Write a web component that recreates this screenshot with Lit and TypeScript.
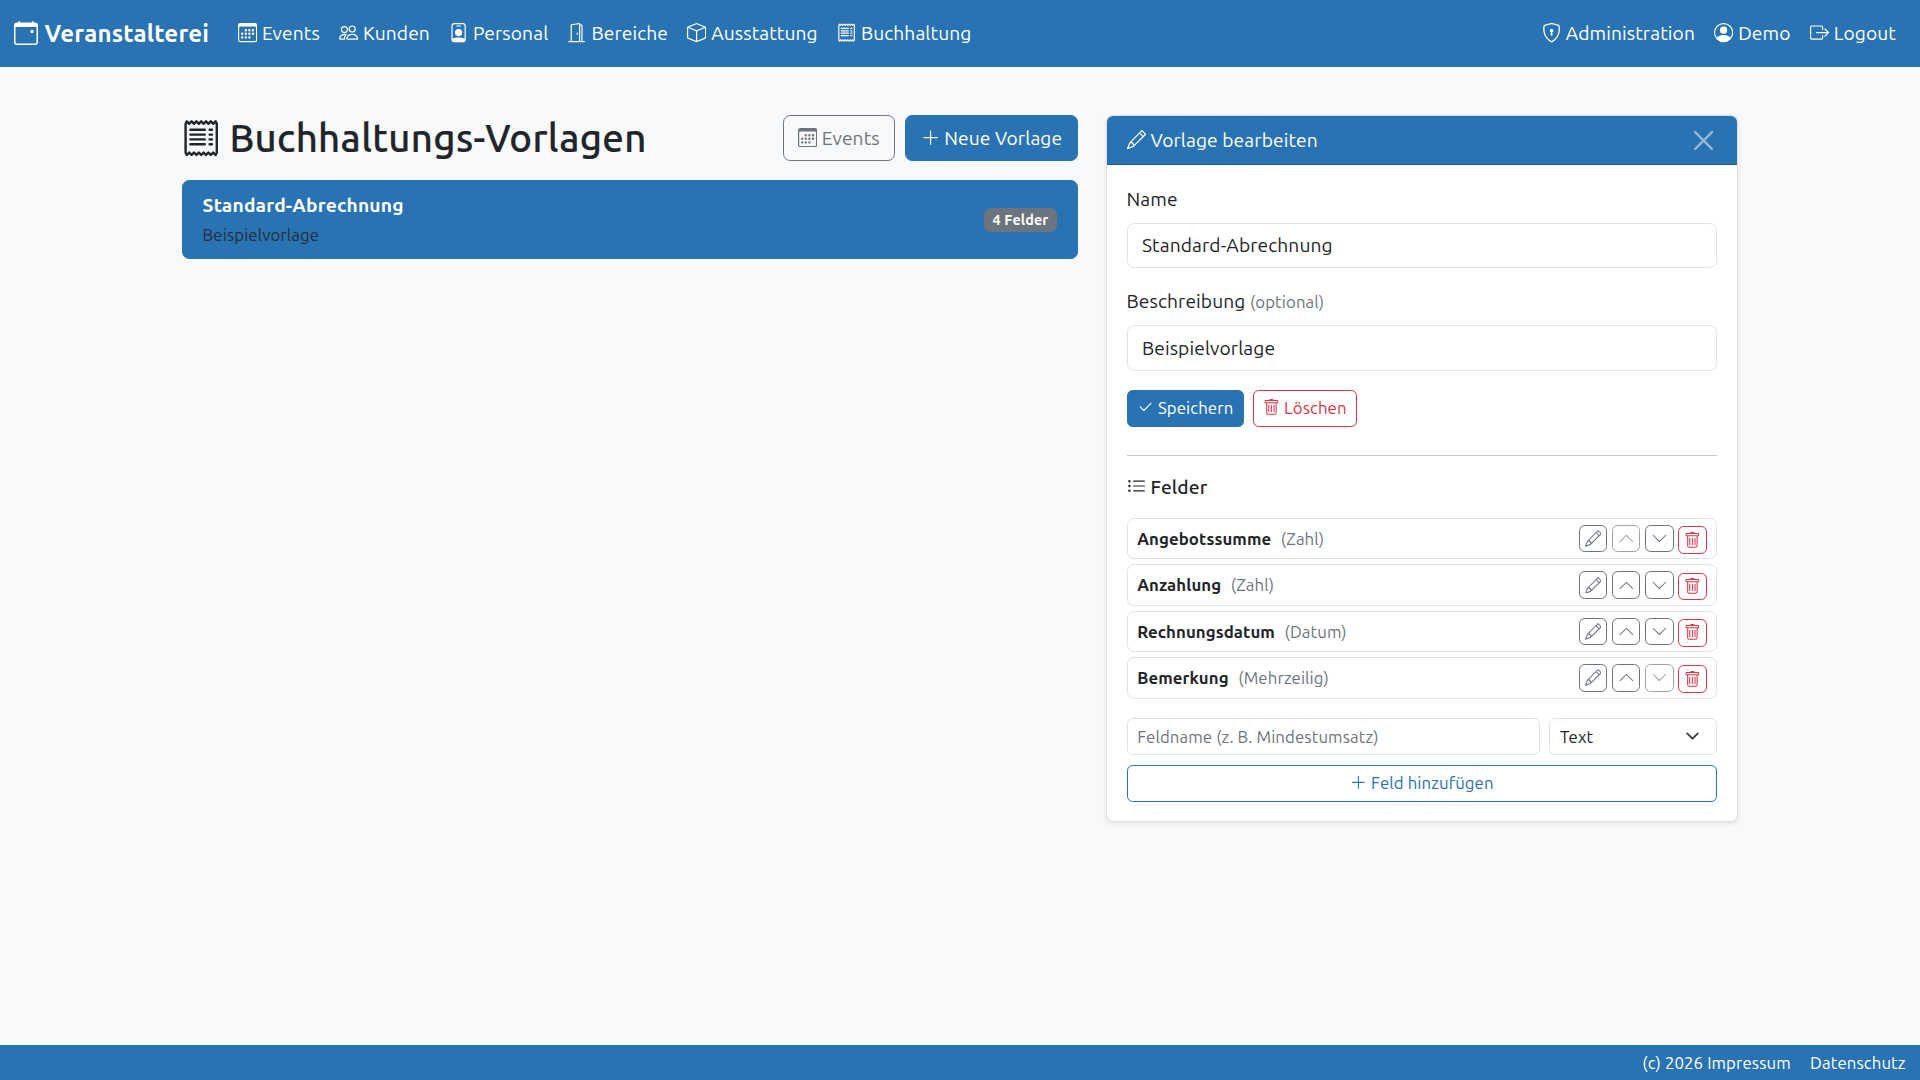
import {LitElement, css, html, svg} from 'lit';
import {customElement} from 'lit/decorators.js';

const ICONS: Record<string, string[]> = {
  calendarEvent: [
    'M11 6.5a.5.5 0 0 1 .5-.5h1a.5.5 0 0 1 .5.5v1a.5.5 0 0 1-.5.5h-1a.5.5 0 0 1-.5-.5z',
    'M3.5 0a.5.5 0 0 1 .5.5V1h8V.5a.5.5 0 0 1 1 0V1h1a2 2 0 0 1 2 2v11a2 2 0 0 1-2 2H2a2 2 0 0 1-2-2V3a2 2 0 0 1 2-2h1V.5a.5.5 0 0 1 .5-.5M1 4v10a1 1 0 0 0 1 1h12a1 1 0 0 0 1-1V4z',
  ],
  calendar3: [
    'M14 0H2a2 2 0 0 0-2 2v12a2 2 0 0 0 2 2h12a2 2 0 0 0 2-2V2a2 2 0 0 0-2-2M1 3.857C1 3.384 1.448 3 2 3h12c.552 0 1 .384 1 .857v10.286c0 .473-.448.857-1 .857H2c-.552 0-1-.384-1-.857z',
    'M6.5 7a1 1 0 1 0 0-2 1 1 0 0 0 0 2m3 0a1 1 0 1 0 0-2 1 1 0 0 0 0 2m3 0a1 1 0 1 0 0-2 1 1 0 0 0 0 2m-9 3a1 1 0 1 0 0-2 1 1 0 0 0 0 2m3 0a1 1 0 1 0 0-2 1 1 0 0 0 0 2m3 0a1 1 0 1 0 0-2 1 1 0 0 0 0 2m3 0a1 1 0 1 0 0-2 1 1 0 0 0 0 2m-9 3a1 1 0 1 0 0-2 1 1 0 0 0 0 2m3 0a1 1 0 1 0 0-2 1 1 0 0 0 0 2m3 0a1 1 0 1 0 0-2 1 1 0 0 0 0 2',
  ],
  people: [
    'M15 14s1 0 1-1-1-4-5-4-5 3-5 4 1 1 1 1zm-7.978-1L7 12.996c.001-.264.167-1.03.76-1.72C8.312 10.629 9.282 10 11 10c1.717 0 2.687.63 3.24 1.276.593.69.758 1.457.76 1.72l-.008.002-.014.002zM11 7a2 2 0 1 0 0-4 2 2 0 0 0 0 4m3-2a3 3 0 1 1-6 0 3 3 0 0 1 6 0M6.936 9.28a6 6 0 0 0-1.23-.247A7 7 0 0 0 5 9c-4 0-5 3-5 4q0 1 1 1h4.216A2.24 2.24 0 0 1 5 13c0-1.01.377-2.042 1.09-2.904.243-.294.526-.569.846-.816M4.92 10A5.5 5.5 0 0 0 4 13H1c0-.26.164-1.03.76-1.724.545-.636 1.492-1.256 3.16-1.275ZM1.5 5.5a3 3 0 1 1 6 0 3 3 0 0 1-6 0m3-2a2 2 0 1 0 0 4 2 2 0 0 0 0-4',
  ],
  personBadge: [
    'M6.5 2a.5.5 0 0 0 0 1h3a.5.5 0 0 0 0-1zM11 8a3 3 0 1 1-6 0 3 3 0 0 1 6 0',
    'M4.5 0A2.5 2.5 0 0 0 2 2.5V14a2 2 0 0 0 2 2h8a2 2 0 0 0 2-2V2.5A2.5 2.5 0 0 0 11.5 0zM3 2.5A1.5 1.5 0 0 1 4.5 1h7A1.5 1.5 0 0 1 13 2.5v10.795a4.2 4.2 0 0 0-.776-.492C11.392 12.387 10.063 12 8 12s-3.392.387-4.224.803a4.2 4.2 0 0 0-.776.492z',
  ],
  doorOpen: [
    'M8.5 10c-.276 0-.5-.448-.5-1s.224-1 .5-1 .5.448.5 1-.224 1-.5 1',
    'M10.828.122A.5.5 0 0 1 11 .5V1h.5A1.5 1.5 0 0 1 13 2.5V15h1.5a.5.5 0 0 1 0 1h-13a.5.5 0 0 1 0-1H3V1.5a.5.5 0 0 1 .43-.495l7-1a.5.5 0 0 1 .398.117M11.5 2H11v13h1V2.5a.5.5 0 0 0-.5-.5M4 1.934V15h6V1.077z',
  ],
  box: [
    'M8.186 1.113a.5.5 0 0 0-.372 0L1.846 3.5 8 5.961 14.154 3.5zM15 4.239l-6.5 2.6v7.922l6.5-2.6V4.24zM7.5 14.762V6.838L1 4.239v7.923zM7.443.184a1.5 1.5 0 0 1 1.114 0l7.129 2.852A.5.5 0 0 1 16 3.5v8.662a1 1 0 0 1-.629.928l-7.185 2.874a.5.5 0 0 1-.372 0L.63 13.09a1 1 0 0 1-.63-.928V3.5a.5.5 0 0 1 .314-.464z',
  ],
  receipt: [
    'M1.92.506a.5.5 0 0 1 .434.14L3 1.293l.646-.647a.5.5 0 0 1 .708 0L5 1.293l.646-.647a.5.5 0 0 1 .708 0L7 1.293l.646-.647a.5.5 0 0 1 .708 0L9 1.293l.646-.647a.5.5 0 0 1 .708 0l.646.647.646-.647a.5.5 0 0 1 .708 0l.646.647.646-.647a.5.5 0 0 1 .801.13l.5 1A.5.5 0 0 1 15 2v12a.5.5 0 0 1-.053.224l-.5 1a.5.5 0 0 1-.8.13L13 14.707l-.646.647a.5.5 0 0 1-.708 0L11 14.707l-.646.647a.5.5 0 0 1-.708 0L9 14.707l-.646.647a.5.5 0 0 1-.708 0L7 14.707l-.646.647a.5.5 0 0 1-.708 0L5 14.707l-.646.647a.5.5 0 0 1-.708 0L3 14.707l-.646.647a.5.5 0 0 1-.801-.13l-.5-1A.5.5 0 0 1 1 14V2a.5.5 0 0 1 .053-.224l.5-1a.5.5 0 0 1 .367-.27m.217 1.338L2 2.118v11.764l.137.274.51-.51a.5.5 0 0 1 .707 0l.646.647.646-.646a.5.5 0 0 1 .708 0l.646.646.646-.646a.5.5 0 0 1 .708 0l.646.646.646-.646a.5.5 0 0 1 .708 0l.646.646.646-.646a.5.5 0 0 1 .708 0l.646.646.646-.646a.5.5 0 0 1 .708 0l.509.509.137-.274V2.118l-.137-.274-.51.51a.5.5 0 0 1-.707 0L12 1.707l-.646.647a.5.5 0 0 1-.708 0L10 1.707l-.646.647a.5.5 0 0 1-.708 0L8 1.707l-.646.647a.5.5 0 0 1-.708 0L6 1.707l-.646.647a.5.5 0 0 1-.708 0L4 1.707l-.646.647a.5.5 0 0 1-.708 0z',
    'M3 4.5a.5.5 0 0 1 .5-.5h6a.5.5 0 1 1 0 1h-6a.5.5 0 0 1-.5-.5m0 2a.5.5 0 0 1 .5-.5h6a.5.5 0 1 1 0 1h-6a.5.5 0 0 1-.5-.5m0 2a.5.5 0 0 1 .5-.5h6a.5.5 0 1 1 0 1h-6a.5.5 0 0 1-.5-.5m0 2a.5.5 0 0 1 .5-.5h6a.5.5 0 0 1 0 1h-6a.5.5 0 0 1-.5-.5m8-6a.5.5 0 0 1 .5-.5h1a.5.5 0 0 1 0 1h-1a.5.5 0 0 1-.5-.5m0 2a.5.5 0 0 1 .5-.5h1a.5.5 0 0 1 0 1h-1a.5.5 0 0 1-.5-.5m0 2a.5.5 0 0 1 .5-.5h1a.5.5 0 0 1 0 1h-1a.5.5 0 0 1-.5-.5m0 2a.5.5 0 0 1 .5-.5h1a.5.5 0 0 1 0 1h-1a.5.5 0 0 1-.5-.5',
  ],
  shieldLock: [
    'M5.338 1.59a61 61 0 0 0-2.837.856.48.48 0 0 0-.328.39c-.554 4.157.726 7.19 2.253 9.188a10.7 10.7 0 0 0 2.287 2.233c.346.244.652.42.893.533q.18.085.293.118a1 1 0 0 0 .101.025 1 1 0 0 0 .1-.025q.114-.034.294-.118c.24-.113.547-.29.893-.533a10.7 10.7 0 0 0 2.287-2.233c1.527-1.997 2.807-5.031 2.253-9.188a.48.48 0 0 0-.328-.39c-.651-.213-1.75-.56-2.837-.855C9.552 1.29 8.531 1.067 8 1.067c-.53 0-1.552.223-2.662.524zM5.072.56C6.157.265 7.31 0 8 0s1.843.265 2.928.56c1.11.3 2.229.655 2.887.87a1.54 1.54 0 0 1 1.044 1.262c.596 4.477-.787 7.795-2.465 9.99a11.8 11.8 0 0 1-2.517 2.453 7 7 0 0 1-1.048.625c-.28.132-.581.24-.829.24s-.548-.108-.829-.24a7 7 0 0 1-1.048-.625 11.8 11.8 0 0 1-2.517-2.453C1.928 10.487.545 7.169 1.141 2.692A1.54 1.54 0 0 1 2.185 1.43 63 63 0 0 1 5.072.56',
    'M9.5 6.5a1.5 1.5 0 0 1-1 1.415l.385 1.99a.5.5 0 0 1-.491.595h-.788a.5.5 0 0 1-.49-.595l.384-1.99a1.5 1.5 0 1 1 2-1.415',
  ],
  personCircle: [
    'M11 6a3 3 0 1 1-6 0 3 3 0 0 1 6 0',
    'M0 8a8 8 0 1 1 16 0A8 8 0 0 1 0 8m8-7a7 7 0 0 0-5.468 11.37C3.242 11.226 4.805 10 8 10s4.757 1.225 5.468 2.37A7 7 0 0 0 8 1',
  ],
  logout: [
    'M10 12.5a.5.5 0 0 1-.5.5h-8a.5.5 0 0 1-.5-.5v-9a.5.5 0 0 1 .5-.5h8a.5.5 0 0 1 .5.5v2a.5.5 0 0 0 1 0v-2A1.5 1.5 0 0 0 9.5 2h-8A1.5 1.5 0 0 0 0 3.5v9A1.5 1.5 0 0 0 1.5 14h8a1.5 1.5 0 0 0 1.5-1.5v-2a.5.5 0 0 0-1 0z',
    'M15.854 8.354a.5.5 0 0 0 0-.708l-3-3a.5.5 0 0 0-.708.708L14.293 7.5H5.5a.5.5 0 0 0 0 1h8.793l-2.147 2.146a.5.5 0 0 0 .708.708z',
  ],
  plus: [
    'M8 2a.5.5 0 0 1 .5.5v5h5a.5.5 0 0 1 0 1h-5v5a.5.5 0 0 1-1 0v-5h-5a.5.5 0 0 1 0-1h5v-5A.5.5 0 0 1 8 2',
  ],
  pencil: [
    'M12.146.146a.5.5 0 0 1 .708 0l3 3a.5.5 0 0 1 0 .708l-10 10a.5.5 0 0 1-.168.11l-5 2a.5.5 0 0 1-.65-.65l2-5a.5.5 0 0 1 .11-.168zM11.207 2.5 13.5 4.793 14.793 3.5 12.5 1.207zm1.586 3L10.5 3.207 4 9.707V10h.5a.5.5 0 0 1 .5.5v.5h.5a.5.5 0 0 1 .5.5v.5h.293zm-9.761 5.175-.106.106-1.528 3.821 3.821-1.528.106-.106A.5.5 0 0 1 5 12.5V12h-.5a.5.5 0 0 1-.5-.5V11h-.5a.5.5 0 0 1-.468-.325',
  ],
  check: [
    'M13.854 3.646a.5.5 0 0 1 0 .708l-7 7a.5.5 0 0 1-.708 0l-3.5-3.5a.5.5 0 1 1 .708-.708L6.5 10.293l6.646-6.647a.5.5 0 0 1 .708 0',
  ],
  trash: [
    'M5.5 5.5A.5.5 0 0 1 6 6v6a.5.5 0 0 1-1 0V6a.5.5 0 0 1 .5-.5m2.5 0a.5.5 0 0 1 .5.5v6a.5.5 0 0 1-1 0V6a.5.5 0 0 1 .5-.5m3 .5a.5.5 0 0 0-1 0v6a.5.5 0 0 0 1 0z',
    'M14.5 3a1 1 0 0 1-1 1H13v9a2 2 0 0 1-2 2H5a2 2 0 0 1-2-2V4h-.5a1 1 0 0 1-1-1V2a1 1 0 0 1 1-1H6a1 1 0 0 1 1-1h2a1 1 0 0 1 1 1h3.5a1 1 0 0 1 1 1zM4.118 4 4 4.059V13a1 1 0 0 0 1 1h6a1 1 0 0 0 1-1V4.059L11.882 4zM2.5 3h11V2h-11z',
  ],
  up: ['M7.646 4.646a.5.5 0 0 1 .708 0l6 6a.5.5 0 0 1-.708.708L8 5.707l-5.646 5.647a.5.5 0 0 1-.708-.708z'],
  down: ['M1.646 4.646a.5.5 0 0 1 .708 0L8 10.293l5.646-5.647a.5.5 0 0 1 .708.708l-6 6a.5.5 0 0 1-.708 0l-6-6a.5.5 0 0 1 0-.708'],
  list: [
    'M5 11.5a.5.5 0 0 1 .5-.5h9a.5.5 0 0 1 0 1h-9a.5.5 0 0 1-.5-.5m0-4a.5.5 0 0 1 .5-.5h9a.5.5 0 0 1 0 1h-9a.5.5 0 0 1-.5-.5m0-4a.5.5 0 0 1 .5-.5h9a.5.5 0 0 1 0 1h-9a.5.5 0 0 1-.5-.5m-3 1a1 1 0 1 0 0-2 1 1 0 0 0 0 2m0 4a1 1 0 1 0 0-2 1 1 0 0 0 0 2m0 4a1 1 0 1 0 0-2 1 1 0 0 0 0 2',
  ],
  close: [
    'M.293.293a1 1 0 0 1 1.414 0L8 6.586 14.293.293a1 1 0 1 1 1.414 1.414L9.414 8l6.293 6.293a1 1 0 0 1-1.414 1.414L8 9.414l-6.293 6.293a1 1 0 0 1-1.414-1.414L6.586 8 .293 1.707a1 1 0 0 1 0-1.414z',
  ],
};

const icon = (name: string) => html`<svg class="bi" viewBox="0 0 16 16" fill="currentColor">
  ${ICONS[name].map((d) => svg`<path d=${d}></path>`)}
</svg>`;

const NAV_LEFT = [
  ['calendar3', 'Events'],
  ['people', 'Kunden'],
  ['personBadge', 'Personal'],
  ['doorOpen', 'Bereiche'],
  ['box', 'Ausstattung'],
  ['receipt', 'Buchhaltung'],
];

const NAV_RIGHT = [
  ['shieldLock', 'Administration'],
  ['personCircle', 'Demo'],
  ['logout', 'Logout'],
];

const FIELDS = [
  {name: 'Angebotssumme', type: 'Zahl', upOff: true, downOff: false},
  {name: 'Anzahlung', type: 'Zahl', upOff: false, downOff: false},
  {name: 'Rechnungsdatum', type: 'Datum', upOff: false, downOff: false},
  {name: 'Bemerkung', type: 'Mehrzeilig', upOff: false, downOff: true},
];

@customElement('app-root')
export class AppRoot extends LitElement {
  static styles = css`
    :host {
      display: flex;
      flex-direction: column;
      min-height: 100vh;
      background: #f8f9fa;
      color: #212529;
      font-family: Ubuntu, 'Noto Sans', sans-serif;
      font-size: 19.2px;
      line-height: 1.5;
      letter-spacing: 0.1px;
    }

    * {
      box-sizing: border-box;
    }

    .bi {
      display: inline-block;
      width: 1em;
      height: 1em;
      vertical-align: -0.125em;
    }

    .navbar {
      display: flex;
      align-items: center;
      justify-content: space-between;
      padding: 9.6px 14.4px;
      background: #2973b2;
      color: #fff;
    }

    .nav-group {
      display: flex;
      align-items: center;
    }

    .brand {
      margin-right: 19.2px;
      padding: 6px 0;
      font-size: 24px;
      font-weight: 700;
      letter-spacing: 0.22px;
    }

    .nav-link {
      padding: 9.6px;
    }

    .nav-link .bi {
      margin-right: 4.8px;
    }

    .brand .bi {
      margin-right: 6px;
    }

    main {
      flex: 1;
      display: grid;
      grid-template-columns: 895.2px 631.2px;
      column-gap: 28.8px;
      align-items: start;
      width: 1584px;
      margin: 0 auto;
      padding: 48px 14.4px 0;
    }

    .head {
      display: flex;
      align-items: center;
      justify-content: space-between;
      margin-bottom: 18.4px;
    }

    h1 {
      margin: 0;
      font-size: 38.4px;
      font-weight: 500;
      line-height: 1.2;
      letter-spacing: 0.33px;
      -webkit-text-stroke: 0.2px currentColor;
    }

    h1 .bi {
      margin-right: 8.6px;
    }

    .actions {
      display: flex;
      gap: 10px;
    }

    .btn {
      display: inline-block;
      padding: 7.6px 14.4px;
      border: 1px solid transparent;
      border-radius: 7.2px;
      background: none;
      font: inherit;
      letter-spacing: inherit;
      text-align: center;
    }

    .btn-sm {
      padding: 4.2px 9.6px 5.4px;
      border-radius: 5.76px;
      font-size: 16.8px;
    }

    .primary {
      background: #2973b2;
      border-color: #2973b2;
      color: #fff;
    }

    .outline-secondary {
      border-color: #6c757d;
      color: #6c757d;
    }

    .outline-danger {
      border-color: #dc3545;
      color: #dc3545;
    }

    .outline-primary {
      border-color: #2973b2;
      color: #2973b2;
    }

    .template {
      display: flex;
      align-items: center;
      justify-content: space-between;
      padding: 10.4px 19.2px;
      border: 1px solid #2973b2;
      border-radius: 7.2px;
      background: #2973b2;
      color: #fff;
    }

    .template-title {
      margin-bottom: 2.2px;
      font-weight: 700;
      letter-spacing: 0.2px;
    }

    .template-desc {
      color: #212529;
      font-size: 16.8px;
      opacity: 0.85;
    }

    .badge {
      margin-top: 1.6px;
      padding: 5px 9px;
      border-radius: 7.2px;
      background: #6c757d;
      color: #fff;
      font-size: 14.4px;
      font-weight: 700;
      line-height: 1;
    }

    .card {
      border: 1px solid rgba(0, 0, 0, 0.125);
      border-radius: 7.2px;
      background: #fff;
      box-shadow: 0 2px 5px rgba(0, 0, 0, 0.09);
      overflow: hidden;
    }

    .card-header {
      display: flex;
      align-items: center;
      justify-content: space-between;
      padding: 9.6px 19.2px;
      border-bottom: 1px solid rgba(0, 0, 0, 0.2);
      background: #2973b2;
      color: #fff;
    }

    .card-header .bi {
      margin-right: 4.8px;
    }

    .close {
      display: flex;
      margin-right: 4px;
      padding: 0;
      border: 0;
      background: none;
      color: #fff;
      font-size: 19.2px;
      opacity: 0.5;
    }

    .close .bi {
      margin: 0;
    }

    .card-body {
      padding: 19.2px;
    }

    label {
      display: block;
      margin-bottom: 9.6px;
    }

    .group:first-child label {
      padding-top: 1px;
      margin-bottom: 8.6px;
    }

    label small {
      color: #6c757d;
      font-size: 16.8px;
    }

    .group {
      margin-bottom: 19.2px;
    }

    input,
    select {
      display: block;
      width: 100%;
      padding: 7.2px 14.4px;
      border: 1px solid #dee2e6;
      border-radius: 7.2px;
      background: #fff;
      color: #212529;
      font: inherit;
      letter-spacing: inherit;
    }

    input::placeholder {
      color: #6c757d;
      opacity: 1;
    }

    .sm {
      padding: 4.8px 9.6px;
      border-radius: 5.76px;
      font-size: 16.8px;
    }

    select {
      appearance: none;
      background-image: url("data:image/svg+xml,%3csvg xmlns='http://www.w3.org/2000/svg' viewBox='0 0 16 16'%3e%3cpath fill='none' stroke='%23343a40' stroke-linecap='round' stroke-linejoin='round' stroke-width='2' d='m2 5 6 6 6-6'/%3e%3c/svg%3e");
      background-repeat: no-repeat;
      background-position: right 14.4px center;
      background-size: 19.2px 14.4px;
    }

    .form-buttons {
      display: flex;
      gap: 8.8px;
    }

    hr {
      margin: 28px 0 20px;
      border: 0;
      border-top: 1px solid rgba(33, 37, 41, 0.25);
    }

    h6 {
      margin: 0 0 19.2px;
      font-size: 19.2px;
      font-weight: 500;
      line-height: 1.2;
    }

    h6 .bi {
      margin-right: 4.8px;
    }

    .fields {
      display: flex;
      flex-direction: column;
      gap: 4.8px;
      margin-bottom: 19.2px;
    }

    .field {
      display: flex;
      align-items: center;
      justify-content: space-between;
      height: 41.6px;
      padding: 0 9.6px;
      border: 1px solid #dee2e6;
      border-radius: 7.2px;
      font-size: 16.8px;
    }

    .field-type {
      margin-left: 9.6px;
      color: #6c757d;
    }

    .tools {
      display: flex;
      align-items: center;
      gap: 4.8px;
    }

    .tool {
      display: flex;
      align-items: center;
      justify-content: center;
      width: 28.4px;
      height: 27.6px;
      padding: 0;
      border: 1px solid #6c757d;
      border-radius: 5.76px;
      background: none;
      color: #6c757d;
      font-size: 16.8px;
    }

    .tool.off {
      opacity: 0.65;
    }

    .tool.danger {
      margin-top: 3px;
      border-color: #dc3545;
      color: #dc3545;
    }

    .add-row {
      display: grid;
      grid-template-columns: 1fr 168px;
      gap: 9.6px;
      margin-bottom: 10.8px;
    }

    .add-btn {
      display: block;
      width: 100%;
      padding-top: 3.6px;
      padding-bottom: 6px;
    }

    footer {
      display: flex;
      justify-content: flex-end;
      gap: 19.2px;
      padding: 4.8px 14.4px;
      background: #2973b2;
      color: #fff;
      font-size: 16.8px;
    }
  `;

  render() {
    return html`
      <nav class="navbar">
        <div class="nav-group">
          <span class="brand">${icon('calendarEvent')}Veranstalterei</span>
          ${NAV_LEFT.map(([i, label]) => html`<span class="nav-link">${icon(i)}${label}</span>`)}
        </div>
        <div class="nav-group">
          ${NAV_RIGHT.map(([i, label]) => html`<span class="nav-link">${icon(i)}${label}</span>`)}
        </div>
      </nav>
      <main>
        <section>
          <div class="head">
            <h1>${icon('receipt')}Buchhaltungs-Vorlagen</h1>
            <div class="actions">
              <button class="btn outline-secondary">${icon('calendar3')} Events</button>
              <button class="btn primary">${icon('plus')} Neue Vorlage</button>
            </div>
          </div>
          <div class="template">
            <div>
              <div class="template-title">Standard-Abrechnung</div>
              <div class="template-desc">Beispielvorlage</div>
            </div>
            <span class="badge">4 Felder</span>
          </div>
        </section>
        <section class="card">
          <div class="card-header">
            <span>${icon('pencil')}Vorlage bearbeiten</span>
            <button class="close">${icon('close')}</button>
          </div>
          <div class="card-body">
            <div class="group">
              <label>Name</label>
              <input value="Standard-Abrechnung" />
            </div>
            <div class="group">
              <label>Beschreibung <small>(optional)</small></label>
              <input value="Beispielvorlage" />
            </div>
            <div class="form-buttons">
              <button class="btn btn-sm primary">${icon('check')} Speichern</button>
              <button class="btn btn-sm outline-danger">${icon('trash')} Löschen</button>
            </div>
            <hr />
            <h6>${icon('list')}Felder</h6>
            <div class="fields">
              ${FIELDS.map(
                (f) => html`<div class="field">
                  <div><b>${f.name}</b><span class="field-type">(${f.type})</span></div>
                  <div class="tools">
                    <button class="tool">${icon('pencil')}</button>
                    <button class="tool ${f.upOff ? 'off' : ''}">${icon('up')}</button>
                    <button class="tool ${f.downOff ? 'off' : ''}">${icon('down')}</button>
                    <button class="tool danger">${icon('trash')}</button>
                  </div>
                </div>`
              )}
            </div>
            <div class="add-row">
              <input class="sm" placeholder="Feldname (z. B. Mindestumsatz)" />
              <select class="sm"><option>Text</option></select>
            </div>
            <button class="btn btn-sm outline-primary add-btn">${icon('plus')} Feld hinzufügen</button>
          </div>
        </section>
      </main>
      <footer>
        <span>(c) 2026 Impressum</span>
        <span>Datenschutz</span>
      </footer>
    `;
  }
}
